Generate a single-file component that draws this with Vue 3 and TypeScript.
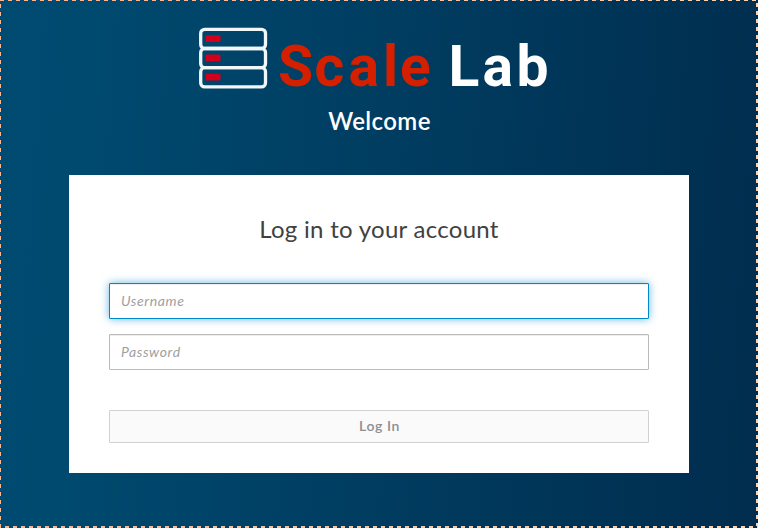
<script setup lang="ts">
import { onMounted, ref } from 'vue'

const username = ref('')
const password = ref('')
const usernameInput = ref<HTMLInputElement | null>(null)
const units: number[] = [2.3, 21.5, 40.7]

onMounted(() => usernameInput.value?.focus())
</script>

<template>
  <main class="login-page">
    <header class="brand">
      <svg class="logo" width="360" height="64" viewBox="0 0 360 64" role="img" aria-label="Scale Lab">
        <g v-for="y in units" :key="y">
          <rect x="1.7" :y="y" width="64.8" height="19.2" rx="4" fill="none" stroke="#f1f6f9" stroke-width="3.3" />
          <rect x="6.5" :y="y + 6" width="15" height="6.8" rx="1" fill="#d3001c" />
        </g>
        <text class="wordmark red" x="79 115.5 149.5 184 201" y="59">Scale</text>
        <text class="wordmark white" x="249.5 283.5 317.5" y="59">Lab</text>
      </svg>
      <h1 class="welcome">Welcome</h1>
    </header>

    <section class="card">
      <h2 class="title">Log in to your account</h2>
      <form class="form" @submit.prevent>
        <input ref="usernameInput" v-model="username" class="field active" type="text" placeholder="Username" />
        <input v-model="password" class="field" type="password" placeholder="Password" />
        <button class="submit" type="submit">Log In</button>
      </form>
    </section>
    <i class="edge top"></i>
    <i class="edge left"></i>
    <i class="edge bottom"></i>
    <i class="edge right"></i>
  </main>
</template>

<style>
body {
  margin: 0;
}
</style>

<style scoped>
.login-page {
  position: relative;
  box-sizing: border-box;
  width: 758px;
  height: 528px;
  padding-top: 27px;
  overflow: hidden;
  display: flex;
  flex-direction: column;
  align-items: center;
  background: linear-gradient(94deg, #004b73 0%, #004a70 10%, #002d4e 100%);
  font-family: Lato, "Liberation Sans", sans-serif;
}
.brand {
  display: flex;
  flex-direction: column;
  align-items: center;
  height: 148px;
  width: 362px;
}
.logo {
  display: block;
  flex: none;
  overflow: visible;
}
.wordmark {
  font: 700 57px Roboto, sans-serif;
}
.red {
  fill: #d52000;
}
.white {
  fill: #fff;
}
.welcome {
  margin: 13px 0 0;
  font-size: 24px;
  line-height: 34px;
  font-weight: 600;
  letter-spacing: 0.4px;
  text-indent: 1px;
  color: #fff;
}
.card {
  box-sizing: border-box;
  width: 620px;
  height: 298px;
  padding: 35px 40px 30px;
  background: #fff;
}
.title {
  margin: 0;
  text-align: center;
  font-size: 24px;
  line-height: 38px;
  font-weight: 400;
  letter-spacing: 0.28px;
  color: #414141;
}
.form {
  display: flex;
  flex-direction: column;
  margin-top: 35px;
}
.field {
  box-sizing: border-box;
  width: 540px;
  height: 36px;
  margin: 0 0 15px;
  padding: 0 11px 2px;
  border: 1px solid #bbb;
  border-radius: 1px;
  outline: none;
  background: #fff;
  box-shadow: inset 0 1px 1px rgba(3, 3, 3, 0.075);
  font: 14px Lato, sans-serif;
  letter-spacing: 0.6px;
}
.field.active {
  border-color: #0088ce;
  box-shadow: inset 0 1px 1px rgba(3, 3, 3, 0.075), 0 0 8px rgba(0, 136, 206, 0.6);
  caret-color: transparent;
}
.field::placeholder {
  color: #a0a0a0;
  font-style: italic;
  opacity: 1;
}
.submit {
  height: 33px;
  margin: 25px 0 0;
  padding: 0 0 2px 1px;
  border: 1px solid #d1d1d1;
  border-radius: 1px;
  background: #fafafa;
  color: #8b8d8f;
  font: 600 14px Lato, sans-serif;
  letter-spacing: 0.6px;
}
.edge {
  position: absolute;
  mix-blend-mode: difference;
}
.top,
.bottom {
  left: 0;
  right: 0;
}
.left,
.right {
  top: 0;
  bottom: 0;
}
.top {
  top: 0;
  height: 1px;
  background: repeating-linear-gradient(90deg, #fff 0 4px, transparent 4px 8px);
}
.left {
  left: 0;
  width: 1px;
  background: repeating-linear-gradient(180deg, transparent 0 4px, #fff 4px 8px);
}
.bottom {
  left: 1px;
  bottom: 0;
  height: 2px;
  background: repeating-linear-gradient(90deg, transparent 0 4px, #fff 4px 8px);
}
.right {
  right: 0;
  bottom: 2px;
  width: 2px;
  background: repeating-linear-gradient(180deg, transparent 0 3px, #fff 3px 7px, transparent 7px 8px);
}
</style>
